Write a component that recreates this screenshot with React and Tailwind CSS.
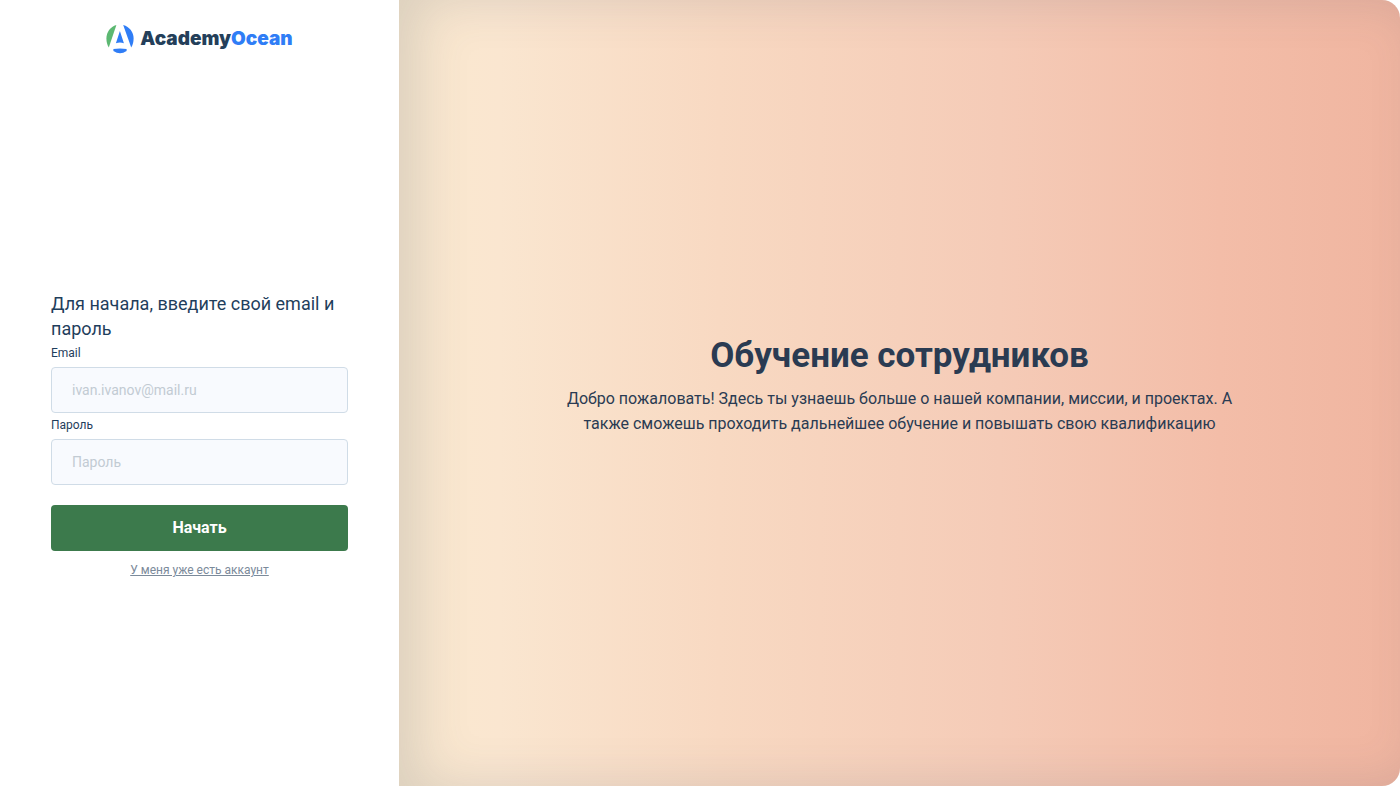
import React from 'react';

const Logo = () => {
  return (
    <a href="/" className="flex items-center justify-center">
      <svg width="28" height="30" viewBox="0 0 28 30" aria-hidden="true">
        <path d="M10.4 1 C4.2 2.8 0.4 8.4 0.4 14.4 C0.4 17.8 1.2 20.8 2.8 23.4 Z" fill="#5cb872" />
        <path d="M17.2 1 C23.6 2.8 27.6 8.4 27.6 14.4 C27.6 17.8 26.8 20.8 25.2 23.4 Z" fill="#2f7df6" />
        <path d="M13.9 7 L17.9 19.2 Q13.9 17.8 9.9 19.2 Z" fill="#2f7df6" />
        <path d="M7.4 24.9 Q14 23.9 20.6 24.9 V27 Q14 31.4 7.4 27 Z" fill="#2f7df6" />
      </svg>
      <span className="ml-[6px] font-['Inter',sans-serif] text-[19px] leading-7 font-black text-[#243f5a]">
        Academy<span className="text-[#2f7df6]">Ocean</span>
      </span>
    </a>
  );
};

const Field = ({ id, label, type, placeholder }) => {
  return (
    <div>
      <label htmlFor={id} className="block text-xs leading-6 text-[#1f3e5c]">
        {label}
      </label>
      <input
        id={id}
        type={type}
        placeholder={placeholder}
        className="mt-[2px] block h-[46px] w-full rounded border border-[#d0dce7] bg-[#f8fafe] px-5 text-sm text-[#1f3e5c] outline-none placeholder:text-[#c2cbd3] focus:border-[#3c7a4c]"
      />
    </div>
  );
};

const App = () => {
  return (
    <div className="flex min-h-screen bg-white font-['Roboto',sans-serif]">
      {/* Sign up form */}
      <div className="flex w-[28.5%] flex-col px-[51px]">
        <header className="pt-6">
          <Logo />
        </header>

        <main className="flex flex-1 flex-col justify-center pt-8">
          <form>
            <h2 className="text-lg leading-[25px] text-[#1f3e5c]">
              Для начала, введите свой email и пароль
            </h2>
            <Field id="email" label="Email" type="email" placeholder="ivan.ivanov@mail.ru" />
            <Field id="password" label="Пароль" type="password" placeholder="Пароль" />
            <button
              type="submit"
              className="mt-5 h-[46px] w-full rounded bg-[#3c7a4c] text-base font-bold text-white"
            >
              Начать
            </button>
            <div className="mt-2 text-center text-xs leading-[22px]">
              <a href="/login" className="text-[#7b8a9a] underline">
                У меня уже есть аккаунт
              </a>
            </div>
          </form>
        </main>
      </div>

      {/* Welcome panel */}
      <section className="flex flex-1 flex-col items-center justify-center rounded-r-[18px] bg-[linear-gradient(90deg,#fae9cf_0%,#fae6d0_10%,#f8d9c2_32%,#f5cbb7_60%,#f3bda8_82%,#f0b5a0_100%)] px-20 pb-4 text-center text-[#2a3b52] shadow-[inset_20px_0_50px_rgba(70,85,105,0.17)]">
        <h1 className="text-[35px] leading-[44px] font-bold">Обучение сотрудников</h1>
        <p className="mt-2 max-w-[700px] text-base leading-[25px]">
          Добро пожаловать! Здесь ты узнаешь больше о нашей компании, миссии, и проектах. А также сможешь проходить
          дальнейшее обучение и повышать свою квалификацию
        </p>
      </section>
    </div>
  );
};

export default App;
